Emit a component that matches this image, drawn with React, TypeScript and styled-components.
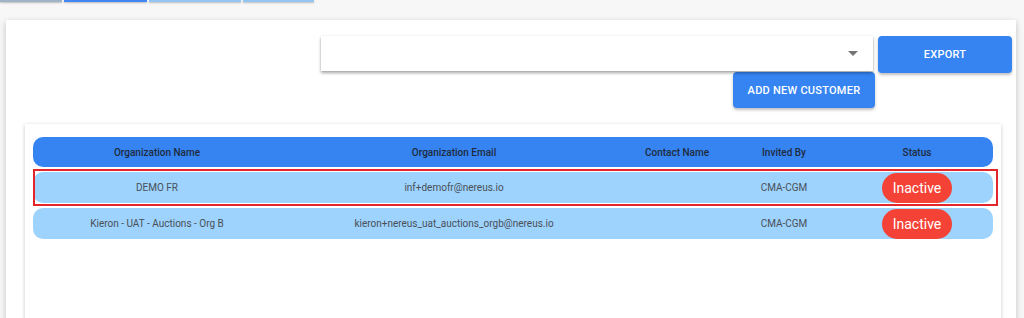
import React from 'react';
import styled, { createGlobalStyle, css } from 'styled-components';

const GlobalStyle = createGlobalStyle`
  html, body {
    margin: 0;
    background: #f7f7f7;
    font-family: Roboto, "Liberation Sans", sans-serif;
  }
`;

const TabStrip = styled.div`
  display: flex;
  gap: 2px;
  height: 2px;
`;

const TabEdge = styled.div<{ width: number, color: string }>`
  width: ${({ width }) => width}px;
  height: 2px;
  background: ${({ color }) => color};
  box-shadow: 0 1px 2px rgba(0, 0, 0, 0.25);
`;

const PageCard = styled.div`
  margin: 18px 8px 0 6px;
  padding: 16px 4px 0 19px;
  min-height: 320px;
  background: #fff;
  box-shadow: 0 2px 6px rgba(0, 0, 0, 0.22);
`;

const Toolbar = styled.div`
  display: grid;
  grid-template-columns: 552px 134px;
  column-gap: 5px;
  justify-content: end;
`;

const SelectBox = styled.div`
  position: relative;
  height: 35px;
  background: #fff;
  box-shadow: 0 2px 3px rgba(0, 0, 0, 0.35), 0 0 1px rgba(0, 0, 0, 0.15);
`;

const SelectArrow = styled.span`
  position: absolute;
  right: 15px;
  top: 15px;
  width: 0;
  height: 0;
  border-left: 5px solid transparent;
  border-right: 5px solid transparent;
  border-top: 5px solid #757575;
`;

const ActionButton = styled.button<{ wide?: boolean }>`
  height: ${({ wide }) => (wide ? 36 : 37)}px;
  width: ${({ wide }) => (wide ? '142px' : '100%')};
  padding: 0;
  border: none;
  border-radius: 4px;
  background: #3584f2;
  color: #fff;
  font-family: Roboto, "Liberation Sans", sans-serif;
  font-size: 11px;
  font-weight: 500;
  letter-spacing: 0.25px;
  text-transform: uppercase;
  box-shadow: 0 2px 3px rgba(0, 0, 0, 0.25);
  justify-self: ${({ wide }) => (wide ? 'end' : 'stretch')};
  margin-top: ${({ wide }) => (wide ? '-1px' : '0')};
  margin-right: ${({ wide }) => (wide ? '-2px' : '0')};
`;

const TableCard = styled.div`
  margin: 16px 11px 0 0;
  padding: 13px 8px 40px;
  min-height: 200px;
  background: #fff;
  box-shadow: 0 1px 4px rgba(0, 0, 0, 0.22);
  display: flex;
  flex-direction: column;
  gap: 5px;
`;

const GridRow = styled.div<{ header?: boolean, highlighted?: boolean }>`
  position: relative;
  display: grid;
  grid-template-columns: 248px 346px 100px 114px 152px;
  align-items: center;
  height: ${({ header }) => (header ? 30 : 31)}px;
  border-radius: 10px;
  background: ${({ header }) => (header ? '#3584f2' : '#9dd3fd')};
  color: ${({ header }) => (header ? '#1f2b3d' : '#4a4f57')};
  font-size: 10px;
  font-weight: ${({ header }) => (header ? 500 : 400)};

  ${({ highlighted }) => highlighted && css`
    &::after {
      content: '';
      position: absolute;
      inset: -3px -5px -3px 0;
      border: 2px solid #e3262b;
      pointer-events: none;
    }
  `}
`;

const Cell = styled.div`
  text-align: center;
  white-space: nowrap;
`;

const StatusBadge = styled.span`
  display: inline-block;
  height: 30px;
  line-height: 30px;
  padding: 0 11px;
  border-radius: 15px;
  background: #f44336;
  color: #fff;
  font-size: 14px;
`;

type Customer = {
  name: string,
  email: string,
  contact: string,
  invitedBy: string,
  status: string,
  highlighted?: boolean,
};

const customers: Customer[] = [
  { name: 'DEMO FR', email: 'inf+demofr@nereus.io', contact: '', invitedBy: 'CMA-CGM', status: 'Inactive', highlighted: true },
  { name: 'Kieron - UAT - Auctions - Org B', email: 'kieron+nereus_uat_auctions_orgb@nereus.io', contact: '', invitedBy: 'CMA-CGM', status: 'Inactive' },
];

const tabs = [
  { width: 62, color: '#9fb2c6' },
  { width: 83, color: '#4285f4' },
  { width: 92, color: '#94c5f2' },
  { width: 71, color: '#94c5f2' },
];

const App = () => (
  <>
    <GlobalStyle />
    <TabStrip>
      {tabs.map(({ width, color }, i) => <TabEdge key={i} width={width} color={color} />)}
    </TabStrip>
    <PageCard>
      <Toolbar>
        <SelectBox>
          <SelectArrow />
        </SelectBox>
        <ActionButton>Export</ActionButton>
        <ActionButton wide>Add new customer</ActionButton>
      </Toolbar>
      <TableCard>
        <GridRow header>
          <Cell>Organization Name</Cell>
          <Cell>Organization Email</Cell>
          <Cell>Contact Name</Cell>
          <Cell>Invited By</Cell>
          <Cell>Status</Cell>
        </GridRow>
        {customers.map(c => (
          <GridRow key={c.email} highlighted={c.highlighted}>
            <Cell>{c.name}</Cell>
            <Cell>{c.email}</Cell>
            <Cell>{c.contact}</Cell>
            <Cell>{c.invitedBy}</Cell>
            <Cell><StatusBadge>{c.status}</StatusBadge></Cell>
          </GridRow>
        ))}
      </TableCard>
    </PageCard>
  </>
);

export default App;
